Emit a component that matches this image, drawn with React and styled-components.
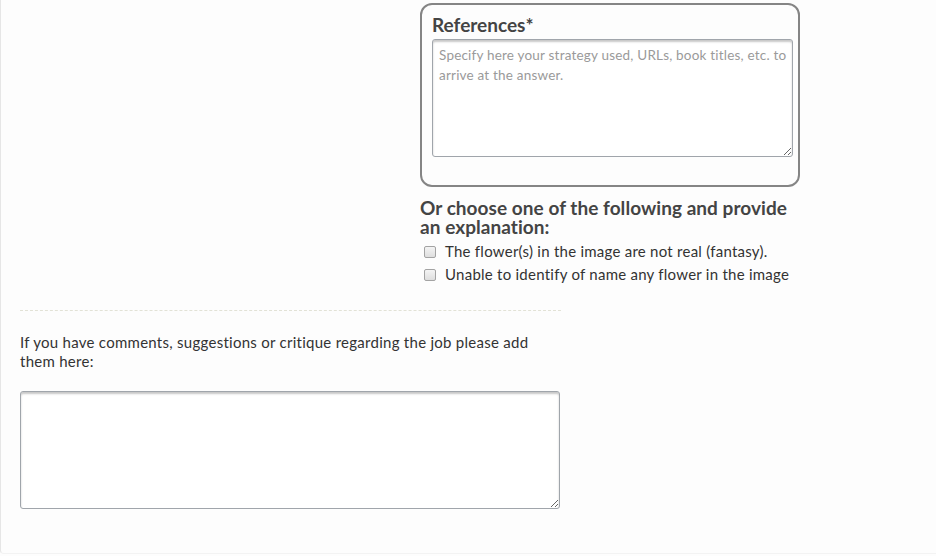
import React from "react";
import styled, { createGlobalStyle } from "styled-components";

const Global = createGlobalStyle`
  html, body { margin: 0; padding: 0; background: #fdfdfd; }
  body { font-family: Lato, "Open Sans", sans-serif; color: #333; }
  * { box-sizing: border-box; }
`;

const Page = styled.div`
  height: 554px;
  border-left: 1px solid #e6e6e6;
  border-bottom: 1px solid #f3f3f3;
  border-bottom-left-radius: 4px;
  padding: 3px 0 0 19px;
  background: #fdfdfd;
`;

const TopRow = styled.div`
  display: grid;
  grid-template-columns: 400px 380px;
`;

const RightCol = styled.div`
  grid-column: 2;
  display: flex;
  flex-direction: column;
`;

const RefBox = styled.div`
  border: 2px solid #858585;
  border-radius: 12px;
  padding: 8px 5px 28px 10px;
  background: #fdfdfd;
  display: flex;
  flex-direction: column;
`;

const BoxTitle = styled.h3`
  margin: 0 0 2px;
  font-size: 19px;
  font-weight: 700;
  line-height: 24px;
  color: #444;
`;

const Area = styled.textarea`
  display: block;
  width: ${(p) => p.$w || "100%"};
  height: ${(p) => p.$h}px;
  border: 1px solid #a0a5ab;
  border-radius: 3px;
  box-shadow: inset 0 2px 2px rgba(0, 0, 0, 0.22);
  background: #fff;
  font-family: Lato, sans-serif;
  font-size: 13.5px;
  letter-spacing: 0.2px;
  line-height: 20px;
  padding: 5px 3px 4px 6px;
  color: #333;
  resize: both;
  outline: none;
  &::placeholder { color: #9a9a9a; }
`;

const Heading = styled.h4`
  margin: 11px 0 4px;
  font-size: 19px;
  letter-spacing: 0.05px;
  font-weight: 700;
  line-height: 19px;
  color: #444;
`;

const CheckRow = styled.label`
  display: flex;
  align-items: center;
  gap: 9px;
  font-size: 15px;
  letter-spacing: 0.25px;
  line-height: 23px;
  color: #333;
  padding-left: 4px;
`;

const Check = styled.input.attrs({ type: "checkbox" })`
  appearance: none;
  -webkit-appearance: none;
  margin: 0;
  width: 12px;
  height: 12px;
  border: 1px solid #a3a3a3;
  border-radius: 2px;
  background: linear-gradient(#f4f4f4, #dedede);
  flex: none;
`;

const Divider = styled.div`
  width: 541px;
  margin-top: 24px;
  border-top: 1px dashed #e2e2d6;
`;

const Comment = styled.p`
  width: 541px;
  margin: 22px 0 20px;
  font-size: 15px;
  letter-spacing: 0.27px;
  line-height: 19px;
  color: #333;
`;

export default function App() {
  return (
    <>
      <Global />
      <Page>
        <TopRow>
          <RightCol>
            <RefBox>
              <BoxTitle>References*</BoxTitle>
              <Area
                $h={118}
                placeholder="Specify here your strategy used, URLs, book titles, etc. to arrive at the answer."
              />
            </RefBox>
            <Heading>Or choose one of the following and provide an explanation:</Heading>
            <CheckRow>
              <Check />
              The flower(s) in the image are not real (fantasy).
            </CheckRow>
            <CheckRow>
              <Check />
              Unable to identify of name any flower in the image
            </CheckRow>
          </RightCol>
        </TopRow>
        <Divider />
        <Comment>
          If you have comments, suggestions or critique regarding the job please add them here:
        </Comment>
        <Area $w="540px" $h={118} />
      </Page>
    </>
  );
}
